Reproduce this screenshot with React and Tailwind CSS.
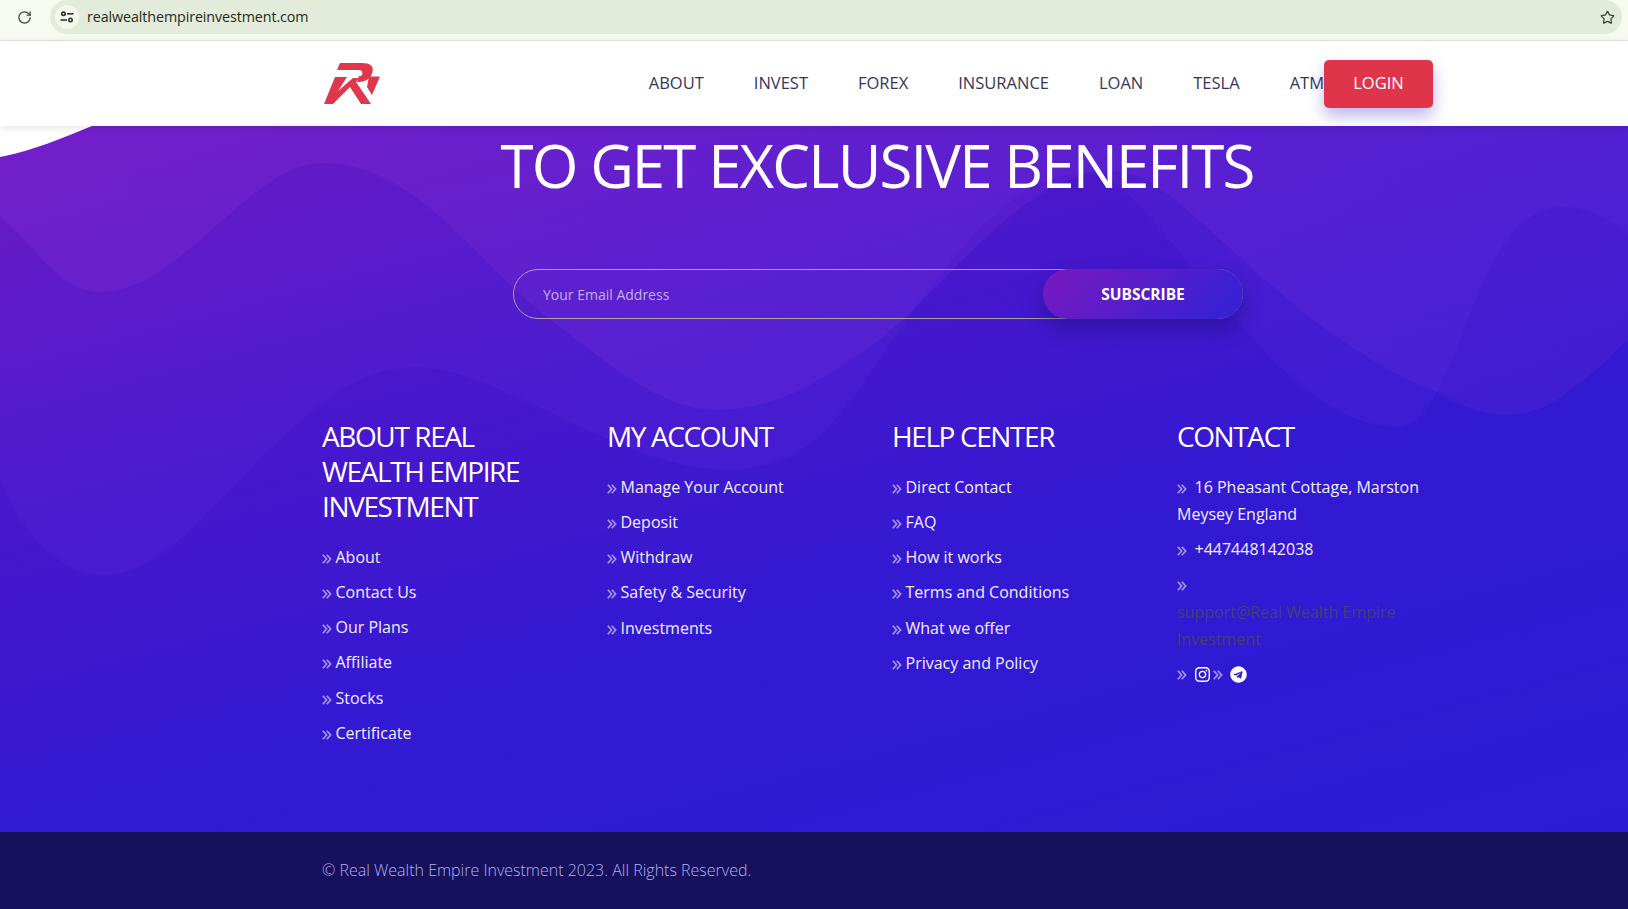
import React from "react";
import { FaInstagram, FaTelegram } from "react-icons/fa";
import { RotateCw, Star } from "lucide-react";

const nav = ["ABOUT", "INVEST", "FOREX", "INSURANCE", "LOAN", "TESLA", "ATM"];

const columns = [
  {
    title: "ABOUT REAL WEALTH EMPIRE INVESTMENT",
    links: [
      ["About", ""],
      ["Contact Us", ""],
      ["Our Plans", ""],
      ["Affiliate", ""],
      ["Stocks", "pt-[1px]"],
      ["Certificate", ""],
    ],
  },
  {
    title: "MY ACCOUNT",
    links: [
      ["Manage Your Account", ""],
      ["Deposit", ""],
      ["Withdraw", ""],
      ["Safety & Security", ""],
      ["Investments", "pt-[1px]"],
    ],
  },
  {
    title: "HELP CENTER",
    links: [
      ["Direct Contact", ""],
      ["FAQ", ""],
      ["How it works", ""],
      ["Terms and Conditions", ""],
      ["What we offer", "pt-[1px]"],
      ["Privacy and Policy", ""],
    ],
  },
];

function Chevrons() {
  return (
    <svg
      width="10"
      height="10"
      viewBox="0 0 10 10"
      fill="none"
      stroke="#a494f4"
      strokeWidth="1.7"
      className="inline-block align-[-1px]"
    >
      <path d="M0.8 0.8 L4.6 5 L0.8 9.2" />
      <path d="M4.8 0.8 L8.6 5 L4.8 9.2" />
    </svg>
  );
}

function Logo() {
  return (
    <svg width="57" height="42" viewBox="0 0 57 42" fill="#df374b">
      <path d="M1 41 L12 14 H24 L15 28 L30 15 H36 L33 19 L48 41 H38 L27 24 L10 41 Z" />
      <path d="M17 0 H39 C47 0 51 3 49.5 9 C48 15 44 18 37 19 H34 L36 13 H37 C39 13 40 11 39 9 C39 8 38 7 36 7 H14 Z" />
      <path d="M46 13.5 H57 L49 32 L44 24 Z" />
    </svg>
  );
}

function ChromeBar() {
  return (
    <div className="h-[41px] bg-[#f6faf0] border-b border-[#e2e7d9] flex items-start">
      <div className="w-[50px] h-[34px] flex items-center justify-center text-[#3d4539]">
        <RotateCw size={15} strokeWidth={2} className="ml-[-2px]" />
      </div>
      <div className="flex-1 h-[34px] mr-[6px] rounded-[17px] bg-[#e3ebda] flex items-center pl-[5px] pr-[5px]">
        <div className="w-[24px] h-[24px] rounded-full bg-[#f4f7ee] flex items-center justify-center">
          <svg width="14" height="12" viewBox="0 0 14 12" fill="none" stroke="#2c322a" strokeWidth="1.6">
            <circle cx="3.5" cy="2.8" r="1.7" />
            <path d="M7 2.8 H13.5" />
            <path d="M0.5 9 H7" />
            <circle cx="10.5" cy="9" r="1.7" />
          </svg>
        </div>
        <span className="ml-[8px] text-[14.3px] text-[#1f2a22] tracking-[-0.1px]">
          realwealthempireinvestment.com
        </span>
        <Star size={15} strokeWidth={2} className="ml-auto text-[#3d4539] translate-x-[-2px]" />
      </div>
    </div>
  );
}

function Header() {
  return (
    <header className="relative z-10 h-[85px] bg-white shadow-[0_2px_8px_rgba(0,0,0,0.1)]">
      <div className="ml-[307px] w-[1126px] h-full flex items-center">
        <div className="pl-[16px]">
          <Logo />
        </div>
        <nav className="ml-auto flex items-center">
          <ul className="flex items-center gap-[50px] text-[16.5px] text-[#36345e]">
            {nav.map((n) => (
              <li key={n}>{n}</li>
            ))}
          </ul>
          <button className="relative ml-0 w-[109px] h-[48px] rounded-[5px] bg-[#de354a] text-white text-[16.5px] shadow-[0_8px_16px_rgba(60,50,200,0.35)]">
            LOGIN
          </button>
        </nav>
      </div>
    </header>
  );
}

function Waves() {
  return (
    <svg className="absolute inset-0 w-full h-full" viewBox="0 126 1628 706" preserveAspectRatio="none">
      <defs>
        <linearGradient id="layerOne" x1="0" y1="0" x2="1" y2="0">
          <stop offset="0" stopColor="#a040e0" stopOpacity="0.16" />
          <stop offset="1" stopColor="#a040e0" stopOpacity="0.1" />
        </linearGradient>
      </defs>
      <path
        d="M0 217 C40 250 60 292 101 292 C180 292 250 163 322 163 C420 163 480 270 560 327 C620 375 670 410 716 410 C760 410 800 395 850 360 C920 320 1000 200 1074 178 C1100 165 1140 170 1162 190 C1230 240 1310 340 1437 392 C1480 420 1530 425 1570 390 C1600 370 1615 350 1628 340 L1628 126 L0 126 Z"
        fill="url(#layerOne)"
      />
      <path
        d="M0 480 C20 530 60 575 104 575 C200 575 290 367 415 367 C500 367 620 470 727 470 C770 470 800 455 826 430 C880 370 930 270 1000 210 C1040 175 1080 165 1110 180 C1180 225 1280 427 1398 427 C1460 427 1470 207 1562 207 C1590 207 1610 220 1628 233 L1628 126 L0 126 Z"
        fill="#8a50f0"
        fillOpacity="0.09"
      />
      <path d="M0 157 C35 150 62 138 92 126 L0 126 Z" fill="#ffffff" />
    </svg>
  );
}

function LinkColumn({ title, links }) {
  return (
    <div className="w-[285px] px-[15px]">
      <h3 className="text-[28px] leading-[35px] tracking-[-1.4px] text-white mb-[20px] font-normal">{title}</h3>
      <ul className="text-[16px] leading-[27px] text-[#f1eefe]">
        {links.map(([label, extra]) => (
          <li key={label} className={`mb-[8px] ${extra}`}>
            <Chevrons />
            <span className="ml-[3.5px]">{label}</span>
          </li>
        ))}
      </ul>
    </div>
  );
}

function ContactColumn() {
  return (
    <div className="w-[285px] px-[15px]">
      <h3 className="text-[28px] leading-[35px] tracking-[-1.4px] text-white mb-[20px] font-normal">CONTACT</h3>
      <ul className="text-[16px] leading-[27px] text-[#f1eefe]">
        <li className="mb-[8px]">
          <Chevrons />
          <span className="ml-[7.5px]">16 Pheasant Cottage, Marston Meysey England</span>
        </li>
        <li className="mb-[8px]">
          <Chevrons />
          <span className="ml-[7.5px]">+447448142038</span>
        </li>
        <li className="mb-[8px]">
          <Chevrons />
          <span className="block mt-[1px] text-[#45416e]">support@Real Wealth Empire Investment</span>
        </li>
        <li className="mb-[8px] flex items-center h-[27px]">
          <Chevrons />
          <FaInstagram className="ml-[7px] w-[17px] h-[17px] text-white" />
          <span className="ml-[2px] flex">
            <Chevrons />
          </span>
          <FaTelegram className="ml-[7px] w-[17px] h-[17px] text-white" />
        </li>
      </ul>
    </div>
  );
}

function Subscribe() {
  return (
    <form className="ml-[206px] mt-[70px] w-[730px] h-[50px] flex items-center rounded-[25px] border border-[#a9a5a0] pl-[29px] relative">
      <input
        className="flex-1 bg-transparent outline-none text-[14px] text-white placeholder:text-[#c0b3e3]"
        placeholder="Your Email Address"
      />
      <button
        type="button"
        className="absolute right-[-1px] top-[-1px] w-[200px] h-[50px] pt-[2px] rounded-[25px] text-white font-bold text-[15.5px] bg-[linear-gradient(135deg,#7a19bf,#2f22d6)] shadow-[0_10px_20px_rgba(25,15,110,0.45)]"
      >
        SUBSCRIBE
      </button>
    </form>
  );
}

export default function App() {
  return (
    <div className="w-[1628px] h-[909px] overflow-hidden font-['Open_Sans',sans-serif] bg-white">
      <ChromeBar />
      <Header />
      <main className="relative h-[706px] bg-[linear-gradient(165deg,#6a14c0_0%,#4a17cb_32%,#3319d2_60%,#2a1cd6_100%)]">
        <Waves />
        <div className="relative ml-[307px] w-[1140px] pt-[5px]">
          <h2 className="text-center text-[60px] leading-[68px] tracking-[-1.9px] text-white font-normal whitespace-nowrap">
            TO GET EXCLUSIVE BENEFITS
          </h2>
          <Subscribe />
          <div className="mt-[100px] flex">
            {columns.map((c) => (
              <LinkColumn key={c.title} title={c.title} links={c.links} />
            ))}
            <ContactColumn />
          </div>
        </div>
      </main>
      <footer className="h-[77px] bg-[#17105c] flex items-center">
        <p className="ml-[322px] mt-[-2px] text-[16px] font-light text-[#aeb0f6]">© Real Wealth Empire Investment 2023. All Rights Reserved.</p>
      </footer>
    </div>
  );
}
